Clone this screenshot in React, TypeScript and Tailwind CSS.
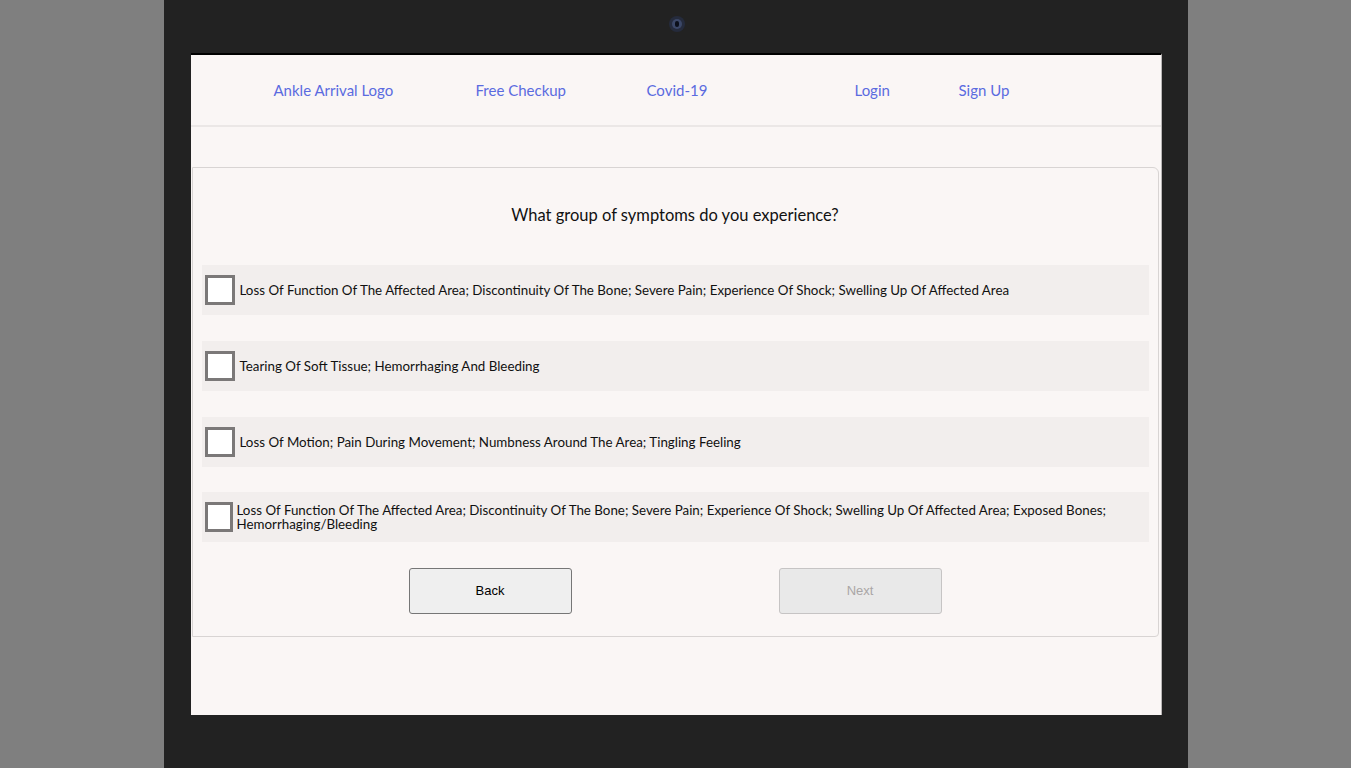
import React from 'react';

const navFont = { fontFamily: 'Lato, "Noto Sans", sans-serif' };

const symptomGroups = [
    'Loss Of Function Of The Affected Area; Discontinuity Of The Bone; Severe Pain; Experience Of Shock; Swelling Up Of Affected Area',
    'Tearing Of Soft Tissue; Hemorrhaging And Bleeding',
    'Loss Of Motion; Pain During Movement; Numbness Around The Area; Tingling Feeling',
    'Loss Of Function Of The Affected Area; Discontinuity Of The Bone; Severe Pain; Experience Of Shock; Swelling Up Of Affected Area; Exposed Bones; Hemorrhaging/Bleeding',
];

const SymptomRow: React.FC<{ label: string; squeezed?: boolean }> = ({ label, squeezed }) => (
    <label className={`flex items-center h-[50px] bg-[#f2eeed] ${squeezed ? '-mt-px' : ''}`}>
        <span
            className={`block shrink-0 h-[30px] ml-[3px] border-[3px] border-[#7b7878] bg-white ${squeezed ? 'w-[28px]' : 'w-[30px]'}`}
        />
        <span className={`text-[13.35px] leading-[14px] text-[#111] pr-[40px] ${squeezed ? 'ml-[4px]' : 'ml-[5px]'}`}>{label}</span>
    </label>
);

const App: React.FC = () => {
    return (
        <div className="h-screen w-full bg-[#7f7f7f] flex justify-center overflow-hidden">
            <div className="w-[1024px] h-full bg-[#222222] flex flex-col">
                {/* webcam */}
                <div className="h-[53px] flex justify-center pt-[16px] pl-[2px]">
                    <div className="w-[16px] h-[16px] rounded-full bg-[#252b3c] flex items-center justify-center blur-[0.6px]">
                        <div className="w-[10px] h-[10px] rounded-full bg-[#3b4767] flex items-center justify-center">
                            <div className="w-[4px] h-[6px] rounded-full bg-[#0b0f1a]" />
                        </div>
                    </div>
                </div>

                <div
                    className="ml-[27px] w-[971px] h-[662px] bg-[#faf6f5] border-t-2 border-black border-r border-r-[#b9b6b6] flex flex-col"
                    style={navFont}
                >
                    <nav className="h-[70px] flex items-center pl-[83px] text-[15px] text-[#5a6be0] border-b-2 border-[#ebe7e6] box-content">
                        <a className="w-[202px]">Ankle Arrival Logo</a>
                        <a className="w-[171px]">Free Checkup</a>
                        <a className="w-[208px]">Covid-19</a>
                        <a className="w-[104px]">Login</a>
                        <a>Sign Up</a>
                    </nav>

                    <div className="mt-[40px] ml-px w-[967px] border border-[#d8d4d3] rounded-tr-[6px] rounded-br-[4px] px-[9px] pt-[35px] pb-[22px]">
                        <h2 className="text-center text-[16.5px] leading-[24px] text-[#111]">
                            What group of symptoms do you experience?
                        </h2>

                        <div className="mt-[38px] flex flex-col gap-[26px]">
                            {symptomGroups.map((group, i) => (
                                <SymptomRow key={i} label={group} squeezed={i === 3} />
                            ))}
                        </div>

                        <div className="mt-[26px] flex justify-evenly" style={{ fontFamily: '"Liberation Sans", Arial, sans-serif' }}>
                            <button className="w-[163px] h-[46px] bg-[#efefef] border border-[#767676] rounded-[3px] text-[13px] text-black">
                                Back
                            </button>
                            <button disabled className="w-[163px] h-[46px] bg-[#e9e9e9] border border-[#c6c4c4] rounded-[3px] text-[13px] text-[#a9a6a6]">
                                Next
                            </button>
                        </div>
                    </div>
                </div>
            </div>
        </div>
    );
};

export default App;
